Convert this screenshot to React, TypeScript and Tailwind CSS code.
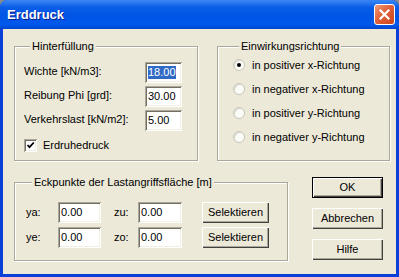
import React from "react";

const fieldRows = [
  { label: "Wichte [kN/m3]:", value: "18.00", selected: true },
  { label: "Reibung Phi [grd]:", value: "30.00" },
  { label: "Verkehrslast [kN/m2]:", value: "5.00" },
];

const directions = [
  "in positiver x-Richtung",
  "in negativer x-Richtung",
  "in positiver y-Richtung",
  "in negativer y-Richtung",
];

const sunken =
  "bg-white shadow-[inset_1px_1px_0_#aca899,inset_-1px_-1px_0_#ffffff,inset_2px_2px_0_#716f64,inset_-2px_-2px_0_#f1efe2]";
const raised =
  "bg-[#ece9d8] shadow-[inset_1px_1px_0_#ffffff,inset_-1px_-1px_0_#404040,inset_-2px_-2px_0_#aca899]";
const groupBox =
  "border border-[#aca899] shadow-[1px_1px_0_#ffffff,inset_1px_1px_0_#ffffff]";

function TextBox({ value, selected, className }: { value: string; selected?: boolean; className: string }) {
  return (
    <div className={`flex h-[21px] items-center pl-[3px] ${sunken} ${className}`}>
      {selected ? (
        <span className="bg-[#316ac5] leading-[13px] text-white">{value}</span>
      ) : (
        <span className="leading-[13px]">{value}</span>
      )}
    </div>
  );
}

function Button({ label, isDefault, className }: { label: string; isDefault?: boolean; className: string }) {
  return (
    <div
      className={`flex items-center justify-center ${
        isDefault
          ? "border border-black bg-[#ece9d8] shadow-[inset_1px_1px_0_#ffffff,inset_-1px_-1px_0_#404040,inset_-2px_-2px_0_#aca899]"
          : raised
      } ${className}`}
    >
      {label}
    </div>
  );
}

export default function App() {
  return (
    <div className="h-[277px] w-[399px] bg-[#8c8c8c] font-['Liberation_Sans',Arial,sans-serif] text-[11px] text-black">
      <div className="flex h-[277px] w-[399px] flex-col overflow-hidden rounded-t-[7px] bg-[#0a3fd8]">
        {/* title bar */}
        <div className="flex h-[29px] items-center justify-between bg-[linear-gradient(to_bottom,#3b86f4_0%,#2a78f0_10%,#0a5de6_25%,#0055e5_55%,#0058ec_85%,#0044cc_100%)] pl-[7px] pr-[4px]">
          <span className="text-[13px] font-bold text-white [text-shadow:1px_1px_0_#0a1e8c]">Erddruck</span>
          <div className="flex h-[21px] w-[21px] items-center justify-center rounded-[3px] border border-white bg-[linear-gradient(135deg,#f09a7a_0%,#e0623a_45%,#c8441b_100%)]">
            <svg width="11" height="11" viewBox="0 0 11 11">
              <path d="M1.5 1.5 L9.5 9.5 M9.5 1.5 L1.5 9.5" stroke="#ffffff" strokeWidth="2.2" strokeLinecap="square" />
            </svg>
          </div>
        </div>

        {/* dialog body */}
        <div className="mx-[3px] mb-[3px] flex flex-1 flex-col bg-[#ece9d8] pl-[11px] pt-[11px]">
          <div className="flex gap-[19px]">
            <fieldset className={`h-[121px] w-[184px] px-[9px] pt-[9px] ${groupBox}`}>
              <legend className="ml-[6px] bg-[#ece9d8] px-[2px] leading-[13px]">Hinterfüllung</legend>
              <div className="flex flex-col gap-[3px]">
                {fieldRows.map((r) => (
                  <div key={r.label} className="flex h-[21px] items-center justify-between">
                    <span className="pb-[3px]">{r.label}</span>
                    <TextBox value={r.value} selected={r.selected} className="mr-[6px] w-[37px]" />
                  </div>
                ))}
              </div>
              <div className="mt-[6px] flex items-center gap-[6px]">
                <div className={`flex h-[13px] w-[13px] items-center justify-center ${sunken}`}>
                  <svg width="9" height="9" viewBox="0 0 9 9">
                    <path d="M1.5 4 L3.5 6.2 L7.8 1.5" stroke="#000" strokeWidth="1.8" fill="none" />
                  </svg>
                </div>
                <span>Erdruhedruck</span>
              </div>
            </fieldset>

            <fieldset className={`h-[121px] w-[173px] pl-[15px] ${groupBox}`}>
              <legend className="ml-[6px] bg-[#ece9d8] px-[2px] leading-[13px]">Einwirkungsrichtung</legend>
              <div className="flex flex-col">
                {directions.map((d, i) => (
                  <div key={d} className="flex h-[24px] items-center gap-[7px]">
                    <div className="flex h-[12px] w-[12px] items-center justify-center rounded-full border border-[#c9c7bb] bg-[#fbfbf8] shadow-[inset_1px_1px_1px_#d9d7cc]">
                      {i === 0 && <div className="h-[4px] w-[4px] rounded-full bg-black" />}
                    </div>
                    <span>{d}</span>
                  </div>
                ))}
              </div>
            </fieldset>
          </div>

          <div className="mt-[15px] flex gap-[24px]">
            <fieldset className={`h-[85px] w-[274px] pl-[11px] pt-[13px] ${groupBox}`}>
              <legend className="ml-[6px] bg-[#ece9d8] px-[2px] leading-[13px]">Eckpunkte der Lastangriffsfläche [m]</legend>
              <div className="flex flex-col gap-[4px]">
                {[
                  ["ya:", "zu:"],
                  ["ye:", "zo:"],
                ].map(([a, b]) => (
                  <div key={a} className="flex h-[21px] items-center">
                    <span className="w-[32px]">{a}</span>
                    <TextBox value="0.00" className="w-[43px]" />
                    <span className="ml-[13px] w-[24px]">{b}</span>
                    <TextBox value="0.00" className="w-[44px]" />
                    <Button label="Selektieren" className="ml-[20px] h-[21px] w-[67px]" />
                  </div>
                ))}
              </div>
            </fieldset>

            <div className="flex flex-col gap-[10px] pt-[1px]">
              <Button label="OK" isDefault className="h-[21px] w-[71px]" />
              <Button label="Abbrechen" className="h-[21px] w-[71px]" />
              <Button label="Hilfe" className="h-[21px] w-[71px]" />
            </div>
          </div>
        </div>
      </div>
    </div>
  );
}
